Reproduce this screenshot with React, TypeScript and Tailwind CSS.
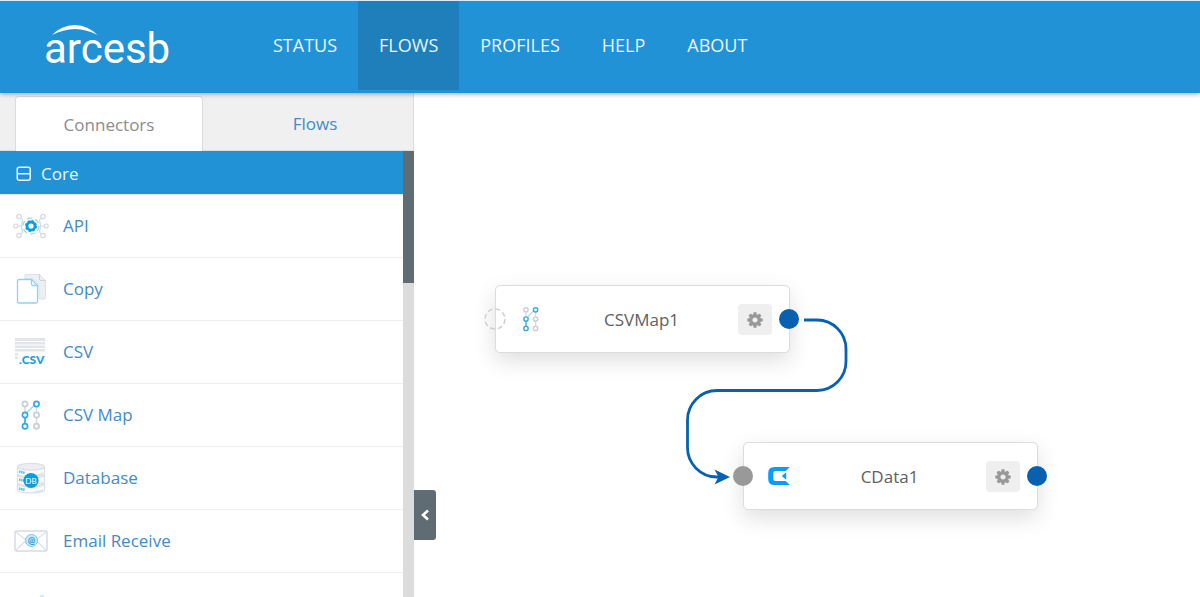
import clsx from "clsx";
import { ReactNode, useState } from "react";

const NAV_ITEMS = ["STATUS", "FLOWS", "PROFILES", "HELP", "ABOUT"];

const GREY = "#d3d9e0";
const BLUE = "#1a9fdc";

function ApiIcon() {
  return (
    <svg width="36" height="28" viewBox="0 0 36 28" fill="none" aria-hidden="true">
      <g stroke={GREY} strokeWidth="1.2">
        <circle cx="6" cy="4.5" r="2.2" />
        <circle cx="2.8" cy="14" r="2" />
        <circle cx="6" cy="23.5" r="2.2" />
        <circle cx="30" cy="4.5" r="2.2" />
        <circle cx="33.2" cy="14" r="2" />
        <circle cx="30" cy="23.5" r="2.2" />
        <path d="M7.8 6.2q2 1.2 1.7 2.8q-2.2 5 0 10q.3 1.6-1.7 2.8M28.2 6.2q-2 1.2-1.7 2.8q2.2 5 0 10q-.3 1.6 1.7 2.8M5 14h3.5M31 14h-3.5" />
      </g>
      <circle cx="18" cy="14" r="8" stroke="#8fd3f0" strokeWidth="1.2" strokeDasharray="5 3.4" />
      <circle cx="18" cy="14" r="5.2" stroke="#0d9ddb" strokeWidth="1.6" strokeDasharray="2.2 1.88" />
      <circle cx="18" cy="14" r="4" stroke="#0d9ddb" strokeWidth="2.8" />
    </svg>
  );
}

function CopyIcon() {
  return (
    <svg width="36" height="32" viewBox="0 0 36 32" fill="none" aria-hidden="true">
      <path d="M12 1.5h14.5l6 6v17a1.5 1.5 0 0 1-1.5 1.5h-5V12l-6-6H12z" fill="#edf0f2" stroke="#dde0e5" />
      <path d="M26.5 1.5v4.5a1.5 1.5 0 0 0 1.5 1.5h4.5" stroke="#ccd1d8" />
      <path
        d="M6 6.5h12.5l6 6V28.5a1.5 1.5 0 0 1-1.5 1.5H6A1.5 1.5 0 0 1 4.5 28.5V8A1.5 1.5 0 0 1 6 6.5z"
        fill="#fff"
        stroke="#8ad3f2"
        strokeWidth="1.3"
      />
      <path d="M18.5 6.5v4.5a1.5 1.5 0 0 0 1.5 1.5h4.5" stroke="#8ad3f2" strokeWidth="1.3" />
    </svg>
  );
}

function CsvIcon() {
  return (
    <svg width="36" height="30" viewBox="0 0 36 30" aria-hidden="true">
      <g fill="#e1e4e9">
        <path d="M2 1h30v3H2zM2 5h30v2.5H2zM2 8.5h30V11H2zM2 12h30v2.5H2zM2 16h3v2.5H2zM2 19.5h3V22H2z" />
      </g>
      <text x="6" y="27" fontFamily="Lato, sans-serif" fontWeight="900" fontSize="12" fill={BLUE}>
        .CSV
      </text>
    </svg>
  );
}

function CsvMapIcon({ height = 32 }: { height?: number }) {
  return (
    <svg width={height - 8} height={height} viewBox="0 0 24 32" fill="none" aria-hidden="true">
      <path d="M6 8v5M17.5 8v5M17.5 19v5" stroke={GREY} strokeWidth="1.4" />
      <path d="M6 19v5" stroke={BLUE} strokeWidth="1.5" />
      <path d="M8 13.5l7.5-7.5" stroke="#9ad8f3" strokeWidth="1.4" />
      <g strokeWidth="1.7" stroke="#c9cfd7">
        <circle cx="6" cy="5" r="2.6" />
        <circle cx="17.5" cy="16" r="2.6" />
        <circle cx="17.5" cy="27.3" r="2.6" />
      </g>
      <g strokeWidth="1.7" stroke="#35aae1" fill="#fff">
        <circle cx="17.5" cy="5" r="2.6" />
        <circle cx="6" cy="16" r="2.6" />
        <circle cx="6" cy="27.3" r="2.6" />
      </g>
    </svg>
  );
}

function DatabaseIcon() {
  return (
    <svg width="36" height="32" viewBox="0 0 36 32" fill="none" aria-hidden="true">
      <g stroke="#dce0e6" strokeWidth="1.2">
        <path d="M4.5 5v6c0 5 27 5 27 0V5" fill="#fafbfc" />
        <path d="M4.5 13v7c0 5 27 5 27 0v-7c-2 4-25 4-27 0z" fill="#fafbfc" />
        <path d="M4.5 22v6c0 3.8 27 3.8 27 0v-6c-2 4-25 4-27 0z" fill="#fafbfc" />
        <ellipse cx="18" cy="4.8" rx="13.5" ry="3.4" fill="#eceef1" />
      </g>
      <path d="M21 12.5q7-.5 9-3v2q-2 2.5-8 2.8zM25 21q4-.6 5-2v2q-1.5 2-5 2zM22 29q6-.4 8-2v1.5q-3 2-9 2z" fill="#dfe3e8" />
      <path d="M6 9.5l6 1.5M6 17.5l5 1.2M6 26.5l6 1.5" stroke="#5cc0ea" strokeWidth="2.4" strokeDasharray="1.6 .5" />
      <circle cx="18" cy="18.5" r="7.6" fill="#0d9ddb" />
      <text x="18" y="21.5" textAnchor="middle" fontFamily="Lato, sans-serif" fontSize="8" fill="#fff">
        DB
      </text>
    </svg>
  );
}

function EmailIcon() {
  return (
    <svg width="36" height="24" viewBox="0 0 36 24" fill="none" aria-hidden="true">
      <rect x="2" y="2" width="32" height="20" rx="1.5" stroke="#d3dbe4" strokeWidth="1.5" />
      <path d="M3 3l15 12L33 3M3 21l10-9.5M33 21l-10-9.5" stroke="#dde2e8" strokeWidth="1.2" />
      <circle cx="18.5" cy="11.5" r="6" fill="#c9eaf8" stroke="#72c8ed" />
      <text x="18.5" y="14.5" textAnchor="middle" fontFamily="Lato, sans-serif" fontWeight="700" fontSize="9" fill={BLUE}>
        @
      </text>
    </svg>
  );
}

function CDataIcon() {
  return (
    <svg width="24" height="20" viewBox="0 0 24 20" fill="#0a9cfb" aria-hidden="true">
      <path d="M23 1l-4.5 4H8.3q-2 0-2 2v6q0 2 2 2h10.200L23 19H7.500Q1.200 19 1.200 12.700V7.300Q1.200 1 7.500 1z" />
      <path d="M19.200 6.300v7.400L14.800 10z" />
    </svg>
  );
}

function GearIcon() {
  return (
    <svg width="18" height="18" viewBox="0 0 1792 1792" fill="currentColor" aria-hidden="true">
      <path d="M1152 896q0-106-75-181t-181-75-181 75-75 181 75 181 181 75 181-75 75-181zm512-109v222q0 12-8 23t-20 13l-185 28q-19 54-39 91 35 50 107 138 10 12 10 25t-9 23q-27 37-99 108t-94 71q-12 0-26-9l-138-108q-44 23-91 38-16 136-29 186-7 28-36 28h-222q-14 0-24.500-8.500t-11.500-21.500l-28-184q-49-16-90-37l-141 107q-10 9-25 9-14 0-25-11-126-114-165-168-7-10-7-23 0-12 8-23 15-21 51-66.500t54-70.500q-27-50-41-99l-183-27q-13-2-21-12.500t-8-23.500v-222q0-12 8-23t19-13l186-28q14-46 39-92-40-57-107-138-10-12-10-24 0-10 9-23 26-36 98.500-107.500t94.500-71.500q13 0 26 10l138 107q44-23 91-38 16-136 29-186 7-28 36-28h222q14 0 24.500 8.500t11.500 21.500l28 184q49 16 90 37l142-107q9-9 24-9 13 0 25 10 129 119 165 170 7 8 7 22 0 12-8 23-15 21-51 66.500t-54 70.500q26 50 41 98l183 28q13 2 21 12.500t8 23.500z" />
    </svg>
  );
}

const CONNECTORS: { name: string; icon: ReactNode }[] = [
  { name: "API", icon: <ApiIcon /> },
  { name: "Copy", icon: <CopyIcon /> },
  { name: "CSV", icon: <CsvIcon /> },
  { name: "CSV Map", icon: <CsvMapIcon /> },
  { name: "Database", icon: <DatabaseIcon /> },
  { name: "Email Receive", icon: <EmailIcon /> },
];

function Header() {
  return (
    <header className="relative z-10 flex h-[93px] shrink-0 border-t border-[#d6ebf8] bg-[#2292d7] shadow-[0_1px_5px_rgba(0,0,0,0.35)]">
      <a href="#" className="ml-11 w-52 pt-6 text-white">
        <span className="relative block font-[Roboto,sans-serif] text-[42px] leading-[48px]">
          <svg className="absolute top-0 left-2" width="46" height="11" viewBox="0 0 46 11" aria-hidden="true">
            <path d="M0 10Q9 .5 23 0Q36 .5 45.500 10Q35 4.500 23 4Q11 4.500 0 10z" fill="#fff" />
          </svg>
          arcesb
        </span>
      </a>
      <nav className="flex">
        {NAV_ITEMS.map((item) => (
          <a
            key={item}
            href="#"
            className={clsx(
              "flex h-[89px] items-center px-[21px] text-[18px] text-[#e9f5fc]",
              item === "FLOWS" && "bg-[#1e7fba]"
            )}
          >
            {item}
          </a>
        ))}
      </nav>
    </header>
  );
}

function Sidebar() {
  const [tab, setTab] = useState("Connectors");

  return (
    <aside className="flex w-[414px] shrink-0 flex-col">
      <div className="flex h-[58px] shrink-0 border-r border-b border-[#dcdcdc] bg-[#f0f0f0] pt-[3px] pl-[15px]">
        {["Connectors", "Flows"].map((name) => (
          <button
            key={name}
            type="button"
            onClick={() => setTab(name)}
            className={clsx(
              "-mb-px pt-px",
              name === "Connectors" ? "w-[188px]" : "flex-1 pl-3.5",
              tab === name
                ? "rounded-t border border-b-0 border-[#dcdcdc] bg-white text-[#8c8c8c]"
                : "text-[#428bca]"
            )}
          >
            {name}
          </button>
        ))}
      </div>
      <div className="flex min-h-0 flex-1">
        <div className="flex min-w-0 flex-1 flex-col overflow-hidden">
          <button
            type="button"
            className="flex h-11 shrink-0 items-center gap-2.5 border-b border-[#dcecf7] bg-[#2292d7] pt-0.5 pl-4 text-[#e9f5fc]"
          >
            <svg width="15" height="16" viewBox="0 0 15 16" fill="none" stroke="currentColor" aria-hidden="true">
              <rect x="1.25" y="1.25" width="13" height="13" rx="2" strokeWidth="1.5" />
              <path d="M2 7.75h12" strokeWidth="1.5" />
            </svg>
            Core
          </button>
          <ul>
            {CONNECTORS.map(({ name, icon }) => (
              <li key={name} className="h-[63px] border-b border-[#eeeeee]">
                <a href="#" className="flex h-full items-center gap-[13px] pl-3 text-[#428bca]">
                  <span className="flex w-[38px] justify-center">{icon}</span>
                  {name}
                </a>
              </li>
            ))}
            <li className="h-[63px] pt-[22px] pl-10">
              <span className="block h-0.5 w-1 bg-[#d3eefa]" />
            </li>
          </ul>
        </div>
        <div className="w-[11px] shrink-0 bg-[#dcdcdc]">
          <div className="h-[132px] bg-[#5f6c74]" />
        </div>
      </div>
    </aside>
  );
}

type FlowNodeProps = { name: string; icon: ReactNode; className: string; hasInput?: boolean };

function FlowNode({ name, icon, className, hasInput }: FlowNodeProps) {
  return (
    <div
      className={clsx(
        "absolute flex h-[68px] w-[295px] items-center rounded-[5px] border border-[#dcdcde] bg-white pr-[17px] pl-[23px] shadow-[0_8px_22px_rgba(0,0,0,0.13)]",
        className
      )}
    >
      {hasInput ? (
        <span className="absolute top-[23px] -left-[11px] size-5 rounded-full bg-[#999999]" />
      ) : (
        <svg className="absolute top-[21px] -left-[13px]" width="24" height="24" viewBox="0 0 24 24" aria-hidden="true">
          <circle cx="12" cy="12" r="10" fill="none" stroke="#cfcfcf" strokeWidth="1.5" strokeDasharray="5 2.85" />
        </svg>
      )}
      <span className="flex w-6 justify-center">{icon}</span>
      <span className="flex-1 pt-0.5 pl-0.5 text-center text-[#606060]">{name}</span>
      <button
        type="button"
        aria-label={`${name} settings`}
        className="flex h-[31px] w-[34px] items-center justify-center rounded-sm bg-[#efefef] pt-0.5 text-[#999999]"
      >
        <GearIcon />
      </button>
      <span className="absolute top-[23px] -right-[10px] size-5 rounded-full bg-[#0861b0]" />
    </div>
  );
}

function FlowCanvas() {
  return (
    <main className="relative min-w-0 flex-1 overflow-hidden bg-white">
      <FlowNode name="CSVMap1" icon={<CsvMapIcon height={28} />} className="top-[192px] left-[81px]" />
      <FlowNode name="CData1" icon={<CDataIcon />} className="top-[349px] left-[329px]" hasInput />
      <svg className="absolute top-[216px] left-[260px]" width="190" height="180" viewBox="0 0 190 180" fill="none" aria-hidden="true">
        <path
          d="M130 11h13a29 29 0 0 1 29 29v12a29 29 0 0 1-29 29.500h-100a29.500 29.500 0 0 0-29.500 29.500v27a29.500 29.500 0 0 0 29.500 30h6"
          stroke="#0861b0"
          strokeWidth="2.8"
        />
        <path d="M56 168l-15.500-7.500 4 7.500-4 7.500z" fill="#0861b0" />
      </svg>
      <button
        type="button"
        aria-label="Collapse sidebar"
        className="absolute top-[397px] left-0 flex h-[50px] w-[22px] items-center justify-center rounded-r-[3px] bg-[#5f6c74]"
      >
        <svg width="10" height="12" viewBox="0 0 10 12" fill="none" aria-hidden="true">
          <path d="M8 1.500L3 6l5 4.500" stroke="#fff" strokeWidth="2.6" />
        </svg>
      </button>
    </main>
  );
}

export default function App() {
  return (
    <div className="flex h-screen flex-col overflow-hidden bg-white font-['Open_Sans',sans-serif] text-[17px]">
      <Header />
      <div className="flex min-h-0 flex-1">
        <Sidebar />
        <FlowCanvas />
      </div>
    </div>
  );
}
